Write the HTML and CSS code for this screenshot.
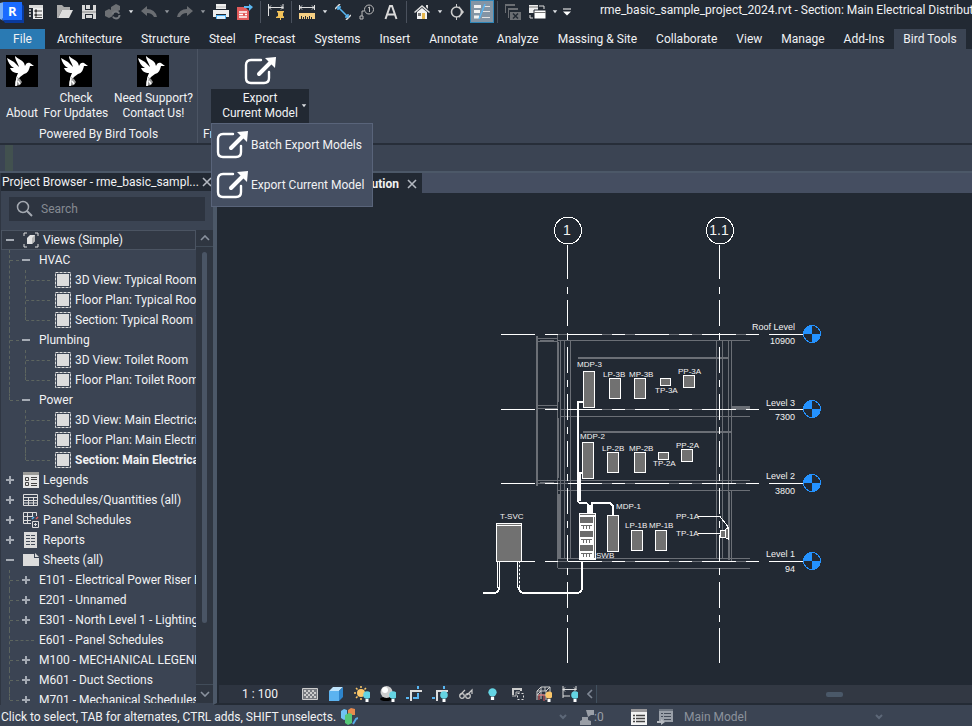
FILE: index.html
```html
<!DOCTYPE html>
<html lang="en">
<head>
<meta charset="utf-8">
<title>rme_basic_sample_project_2024.rvt</title>
<link rel="stylesheet" href="styles.css">
</head>
<body>
<svg class="defs" aria-hidden="true">
  <symbol id="caret" viewBox="0 0 8 5"><path d="M1 0h6L4 4z" fill="#dcdfe3"/></symbol>
  <symbol id="bird" viewBox="0 0 32 32">
    <rect width="32" height="32" fill="#000"/>
    <path d="M1 3l7 4 5 5c-1-4-4-7-4-11 3 3 7 4 9 7l1 3c1-3 3-4 5-3l4 3-4 0c-1 4-2 7-6 8l-4 3-2 3-2-2 2-5c-4 0-7-2-8-5l4 0C4 11 2 7 1 3z" fill="#fff"/>
    <path d="M11 22l3 2 2 3-2 3-5 1 0-4z" fill="#9a9a9a"/><path d="M11 23l-1 8M12 26l2 3" stroke="#fff" stroke-width="1.500"/>
  </symbol>
  <symbol id="export" viewBox="0 0 32 32">
    <path d="M17 5H7Q2 5 2 10v13q0 5 5 5h13q5 0 5-5v-6" fill="none" stroke="#fff" stroke-width="2.4" stroke-linecap="round"/>
    <path d="M15 19L28 6" stroke="#fff" stroke-width="4" stroke-linecap="round"/>
    <path d="M21 3l11-1-1 11z" fill="#fff"/>
  </symbol>
  <symbol id="view" viewBox="0 0 16 16">
    <rect x=".5" y=".5" width="15" height="15" fill="none" stroke="#dcdcdc" stroke-dasharray="3 1"/>
    <rect x="2" y="2" width="12" height="12" fill="#dcdcdc"/>
  </symbol>
  <symbol id="close" viewBox="0 0 10 10"><path d="M1 1l8 8M9 1L1 9" stroke="#b3b8c0" stroke-width="1.6"/></symbol>
  <symbol id="chev" viewBox="0 0 8 6"><path d="M1 1l3 3 3-3" fill="none" stroke="#5d6878" stroke-width="2"/></symbol>
  <symbol id="bulb" viewBox="0 0 8 11"><circle cx="4" cy="4" r="3.8" fill="#64d4e3"/><path d="M2.500 8h3v3h-3z" fill="#fff"/></symbol>
</svg>

<header class="titlebar">
  <div class="quick">
    <button class="tool logo" aria-label="Application menu"><svg width="24" height="24"><path d="M0 3l4-1v19l-4-2z" fill="#78aef5"/><path d="M2 19l3 4h19V6l-3-3z" fill="#0a3a9c"/><path d="M3 2h19v18H3z" fill="#1a6bff"/><text x="8" y="16" class="logo-r">R</text></svg></button>
    <button class="tool props" aria-label="Properties"><svg width="16" height="16"><path d="M1 1h14v3H1z" fill="#d9d9d9"/><path d="M5 4h10v11H5z" fill="#eee"/><path d="M1 5h2v2H1zM1 8h2v2H1zM1 11h2v2H1z" fill="#aaa"/><path d="M7 6h2v2H7zM7 10h2v2H7zM10 7h4M10 11h4M7 13.500h7" fill="#333" stroke="#444"/></svg></button>
    <button class="tool" aria-label="Open"><svg width="16" height="16"><path d="M0 1h5l2 2h6v3H5l-4 8H0z" fill="#aaa"/><path d="M5 6h11l-4 8H1z" fill="#dedede"/></svg></button>
    <button class="tool" aria-label="Save"><svg width="16" height="16"><path d="M1 1h14v14H1z" fill="#d8d8d8"/><path d="M4 1h8v5H4zM4 10h8v5H4z" fill="#222933"/><path d="M5 1h4v4H5zM5 11h6v3H5z" fill="#d8d8d8"/><path d="M1 8h14" stroke="#888"/></svg></button>
    <button class="tool" aria-label="Synchronize"><svg width="18" height="18"><path d="M1 8l4-2 4 2v5l-4 2-4-2zM7 4l5-3 4 2v4l-4 2-5-1z" fill="#6d7074"/><circle cx="12" cy="12" r="3.500" fill="#222933" stroke="#777b80" stroke-width="2" stroke-dasharray="9 2"/></svg></button>
    <button class="arrow" aria-label="Synchronize options"><svg width="6" height="4"><use href="#caret"/></svg></button>
    <button class="tool" aria-label="Undo"><svg width="16" height="16"><path d="M0 7l6-5v3q8 0 10 8h-3q-2-4-7-4v3z" fill="#6a6d72"/></svg></button>
    <button class="arrow" aria-label="Undo list"><svg width="6" height="4"><use href="#caret" opacity=".6"/></svg></button>
    <button class="tool" aria-label="Redo"><svg width="16" height="16"><path d="M16 7l-6-5v3q-8 0-10 8h3q2-4 7-4v3z" fill="#6a6d72"/></svg></button>
    <button class="arrow" aria-label="Redo list"><svg width="6" height="4"><use href="#caret" opacity=".6"/></svg></button>
    <button class="tool" aria-label="Print"><svg width="16" height="16"><path d="M3 0h10v5H3zM0 6h16v7h-3v-3H3v3H0z" fill="#eee"/><path d="M3 3h10" stroke="#bbb"/><path d="M3 11h10v4H3z" fill="#4fb3f6"/><path d="M4 12h8v3H4z" fill="#d9efff"/></svg></button>
    <button class="tool" aria-label="Export PDF"><svg width="16" height="16"><path d="M0 3h8l4 4v9H0z" fill="#e25b5b"/><path d="M2 8h8M2 10.500h4M2 13h8M8 10.500h2" stroke="#fff" stroke-width="1.500"/><path d="M7 2h5V0l4 3-4 4V4H7z" fill="#5cb8f2"/></svg></button>
    <span class="sep"></span>
    <button class="tool" aria-label="Pinned dimension"><svg width="16" height="16"><path d="M.5 0v12M15 0v5M1 3.500h14M3 1.500l-2 2 2 2M13 1.500l2 2-2 2" fill="none" stroke="#e0e0e0"/><path d="M9 7h7v1l-1 1v3l2 1v1H8v-1l2-1V9L9 8zM12 14h1v3h-1z" fill="#f2c25a"/></svg></button>
    <span class="sep"></span>
    <button class="tool" aria-label="Measure"><svg width="16" height="16"><path d="M.5 1v5M15.500 1v5M1 3.500h14M3 1.500l-2 2 2 2M13 1.500l2 2-2 2" fill="none" stroke="#e0e0e0"/><path d="M0 9h16v6H0z" fill="#f5cf83"/><path d="M2.500 12v3M4.500 13v2M6.500 12v3M8.500 13v2M10.500 12v3M12.500 13v2" stroke="#222933"/></svg></button>
    <button class="arrow" aria-label="Measure options"><svg width="6" height="4"><use href="#caret"/></svg></button>
    <button class="tool" aria-label="Aligned dimension"><svg width="16" height="16"><path d="M0 5l5-5M11 16l5-5" stroke="#ddd" stroke-width="1.500"/><path d="M3 3l10 10M3 6V3h3M10 13h3v-3" fill="none" stroke="#58b6f2" stroke-width="1.500"/></svg></button>
    <button class="tool" aria-label="Tag by category"><svg width="16" height="16"><circle cx="10" cy="5.500" r="4.500" fill="none" stroke="#bbb"/><path d="M9 4l1.500-1v5M5 7H3v5M1 12h3v3H1z" fill="none" stroke="#bbb"/></svg></button>
    <button class="tool" aria-label="Text"><svg width="16" height="16"><path d="M2.500 15L7 2h2l4.500 13M4 10.500h8" fill="none" stroke="#dadada" stroke-width="2"/></svg></button>
    <span class="sep"></span>
    <button class="tool" aria-label="3D view"><svg width="16" height="16"><path d="M0 8l8-7 8 7-1 1-7-6-7 6z" fill="#ddd"/><path d="M3 8l5-4 5 4v7H3z" fill="#f3f3f3"/><path d="M12 1h2v4l-2-2z" fill="#ddd"/><path d="M8 9h3v6H8z" fill="#e5b64c"/><path d="M4 9h3v3H4z" fill="#777"/></svg></button>
    <button class="arrow" aria-label="3D view options"><svg width="6" height="4"><use href="#caret"/></svg></button>
    <button class="tool" aria-label="Section"><svg width="16" height="16"><path d="M6.500 0v16" stroke="#ccc"/><path d="M9 2l5 6-5 6z" fill="#ccc"/><circle cx="6.500" cy="8" r="5" fill="#222933" stroke="#ccc" stroke-width="1.600"/></svg></button>
    <button class="tool toggled" aria-label="Thin lines" aria-pressed="true"><svg width="18" height="18"><path d="M1 3.500h7M1 8.500h6M1 14h5" stroke="#f1f1f1" stroke-width="3"/><path d="M11 3.500h6M10 8.500h7M9 14.500h8" stroke="#e2e2e2"/><path d="M12 1L6 16" stroke="#5bb4ee" stroke-width="1.500"/></svg></button>
    <span class="sep"></span>
    <button class="tool" aria-label="Close inactive views"><svg width="16" height="16"><path d="M0 0h10v2H0zM0 2h1v7H0zM3 4h10v2H3zM3 6h1v8H3zM5 8h11v8H5z" fill="#6b6e73"/><path d="M8 9.500l5 5M13 9.500l-5 5" stroke="#222933" stroke-width="1.500"/></svg></button>
    <button class="tool" aria-label="Switch windows"><svg width="18" height="16"><path d="M1 1h9v8H1z" fill="#eee"/><path d="M6 6h12v9H6z" fill="#fff" stroke="#222933"/><path d="M1 3h9M6 8.500h12" stroke="#777"/><path d="M11 2h5v3M2 11v3h3" fill="none" stroke="#ddd"/></svg></button>
    <button class="arrow" aria-label="Switch windows list"><svg width="6" height="4"><use href="#caret"/></svg></button>
    <button class="arrow" aria-label="Customize toolbar"><svg width="10" height="8"><path d="M1 1h8" stroke="#fff"/><path d="M1 3.500h8l-4 4z" fill="#fff"/></svg></button>
  </div>
  <h1>rme_basic_sample_project_2024.rvt - Section: Main Electrical Distribution</h1>
</header>

<nav class="tabs">
  <a href="#" class="file">File</a><a href="#">Architecture</a><a href="#">Structure</a><a href="#">Steel</a><a href="#">Precast</a><a href="#">Systems</a><a href="#">Insert</a><a href="#">Annotate</a><a href="#">Analyze</a><a href="#">Massing &amp; Site</a><a href="#">Collaborate</a><a href="#">View</a><a href="#">Manage</a><a href="#">Add-Ins</a><a href="#" class="current">Bird Tools</a>
</nav>

<section class="ribbon">
  <div class="panel bird-panel">
    <div class="panel-buttons">
      <button class="big"><svg width="32" height="32"><use href="#bird"/></svg><span>About</span></button>
      <button class="big"><svg width="32" height="32"><use href="#bird"/></svg><span>Check<br>For Updates</span></button>
      <button class="big"><svg width="32" height="32"><use href="#bird"/></svg><span>Need Support?<br>Contact Us!</span></button>
    </div>
    <div class="panel-title">Powered By Bird Tools</div>
  </div>
  <div class="panel export-panel">
    <div class="dropdown">
      <button class="big split"><svg width="32" height="32"><use href="#export"/></svg><span>Export<br>Current Model</span><svg class="split-caret" width="6" height="4"><use href="#caret"/></svg></button>
      <div class="menu">
        <button><svg width="32" height="32"><use href="#export"/></svg>Batch Export Models</button>
        <button><svg width="32" height="32"><use href="#export"/></svg>Export Current Model</button>
      </div>
    </div>
    <div class="panel-title">Free</div>
  </div>
</section>
<div class="options"></div>

<main class="work">
  <aside class="browser">
    <div class="browser-head"><h2>Project Browser - rme_basic_sampl...</h2><button aria-label="Close project browser"><svg width="10" height="10"><use href="#close"/></svg></button></div>
    <label class="search"><svg width="18" height="18"><circle cx="7" cy="7" r="5.500" fill="none" stroke="#a4a9b1" stroke-width="1.500"/><path d="M11 11l5 5" stroke="#a4a9b1" stroke-width="2"/></svg><input type="text" placeholder="Search" aria-label="Search"></label>
    <div class="tree-wrap">
      <ul class="tree">
        <li><div class="row selected"><i class="minus"></i><svg width="16" height="16"><path d="M1 4V1h3M12 1h3v3M15 12v3h-3M4 15H1v-3" fill="none" stroke="#ddd"/><path d="M4 6l3-3h5v6l-3 3H4z" fill="#e4e4e4"/><path d="M9 12V6l3-3v6z" fill="#b5b5b5"/></svg>Views (Simple)</div>
          <ul>
            <li><div class="row"><i class="minus"></i>HVAC</div>
              <ul>
                <li><div class="row"><svg width="16" height="16"><use href="#view"/></svg>3D View: Typical Room</div></li>
                <li><div class="row"><svg width="16" height="16"><use href="#view"/></svg>Floor Plan: Typical Room</div></li>
                <li><div class="row"><svg width="16" height="16"><use href="#view"/></svg>Section: Typical Room View</div></li>
              </ul></li>
            <li><div class="row"><i class="minus"></i>Plumbing</div>
              <ul>
                <li><div class="row"><svg width="16" height="16"><use href="#view"/></svg>3D View: Toilet Room</div></li>
                <li><div class="row"><svg width="16" height="16"><use href="#view"/></svg>Floor Plan: Toilet Room</div></li>
              </ul></li>
            <li><div class="row"><i class="minus"></i>Power</div>
              <ul>
                <li><div class="row"><svg width="16" height="16"><use href="#view"/></svg>3D View: Main Electrical</div></li>
                <li><div class="row"><svg width="16" height="16"><use href="#view"/></svg>Floor Plan: Main Electrical</div></li>
                <li><div class="row active"><svg width="16" height="16"><use href="#view"/></svg>Section: Main Electrical</div></li>
              </ul></li>
          </ul></li>
        <li><div class="row"><i class="plus"></i><svg width="16" height="16"><path d="M0 0h16v16H0z" fill="#e6e6e6"/><path d="M0 0h16v3H0z" fill="#9b9b98"/><path d="M2.500 5.500h3v3h-3zM2.500 10.500h3v3h-3zM8 5.500h6M8 7.500h6M8 11.500h6M8 13.500h6" fill="none" stroke="#444"/></svg>Legends</div></li>
        <li><div class="row"><i class="plus"></i><svg width="16" height="16"><path d="M.5 2.500h14v11H.5zM.5 5.500h14M.5 8.500h14M.5 11h14M5.500 5v8M10.500 5v8" fill="none" stroke="#ddd"/></svg>Schedules/Quantities (all)</div></li>
        <li><div class="row"><i class="plus"></i><svg width="16" height="16"><path d="M8 11.500H.5V.5h13V4M.5 4.500H9M.5 8.500H8M4.500 .5v11M9.500 .5V5" fill="none" stroke="#ddd"/><path d="M9.500 9.500h6v6h-6zM12.500 11v3M11 12.500h3" fill="none" stroke="#ddd"/><path d="M9 7l2-2" stroke="#58b6f2" stroke-width="1.500"/><path d="M13 7l2-2" stroke="#e25b5b" stroke-width="1.500"/></svg>Panel Schedules</div></li>
        <li><div class="row"><i class="plus"></i><svg width="16" height="16"><path d="M1 0h13v16H1z" fill="#dcdcdc"/><path d="M3 3.500h4M3 6.500h4M3 9.500h4M3 12.500h4M8 3.500h4M8 6.500h4M8 9.500h4M8 12.500h4" stroke="#444c59"/></svg>Reports</div></li>
        <li><div class="row"><i class="minus"></i><svg width="16" height="16"><path d="M0 2h11v4h5v8H0zM12 1l4 4h-4z" fill="#dcdcdc"/></svg>Sheets (all)</div>
          <ul>
            <li><div class="row"><i class="plus"></i>E101 - Electrical Power Riser Diagram</div></li>
            <li><div class="row"><i class="plus"></i>E201 - Unnamed</div></li>
            <li><div class="row"><i class="plus"></i>E301 - North Level 1 - Lighting</div></li>
            <li class="leaf"><div class="row"><i></i>E601 - Panel Schedules</div></li>
            <li><div class="row"><i class="plus"></i>M100 - MECHANICAL LEGEND</div></li>
            <li><div class="row"><i class="plus"></i>M601 - Duct Sections</div></li>
            <li><div class="row"><i class="plus"></i>M701 - Mechanical Schedules</div></li>
          </ul></li>
      </ul>
      <div class="scroll">
        <button aria-label="Scroll up"><svg width="10" height="6"><path d="M1 5l4-4 4 4" fill="none" stroke="#8a929e" stroke-width="1.600"/></svg></button>
        <div class="track"><span></span></div>
        <button class="down" aria-label="Scroll down"><svg width="10" height="6"><path d="M1 1l4 4 4-4" fill="none" stroke="#8a929e" stroke-width="1.600"/></svg></button>
      </div>
    </div>
  </aside>

  <section class="document">
    <div class="doc-tabs"><div class="doc-tab"><span>Electrical Distribution</span><button aria-label="Close view"><svg width="10" height="10"><use href="#close"/></svg></button></div></div>
    <div class="canvas">
      <svg class="drawing" viewBox="217 193 755 492" preserveAspectRatio="xMinYMin meet" role="img" aria-label="Section: Main Electrical Distribution">
        <g class="grey">
          <path d="M558 334.500h192M558 340.500h192M560 409.500h190M560 416.500h190M558 480.500h192M558 483.500h192M558 490.500h192M560 558.500h190M558 561.500h192M558 568.500h192"/>
          <path d="M557.500 335v233M560.500 341v218M564.500 341v218M570.500 341v218M716.500 341v218M722.500 341v218M728.500 341v218M731.500 341v142M731.500 490v71"/>
          <path d="M537.500 338.500h20v3h-20zM540 340h14M537.500 405.500h20v3h-20zM537.500 480.500h20v3h-20zM540 482h14"/>
          <path class="thick" d="M537 336v150M558 342v60M558 418v60M559 494v65M578 358h150M583 432h148M729 492v68M732 407h18M732 409h18"/>
        </g>
        <g class="white">
          <path class="leveldash" d="M501 334.500h258M501 409.500h258M501 483.500h258M501 561.500h258"/>
          <path d="M769 334.500h34M769 409.500h34M769 483.500h34M769 561.500h34"/>
          <path d="M567.500 245v34M567.500 287v7M567.500 628v35M719.500 245v34M719.500 287v7M719.500 628v35"/>
          <path class="griddash" d="M567.500 300v328M719.500 300v328"/>
          <circle cx="568" cy="230.500" r="13.500"/><circle cx="720" cy="230.500" r="13.500"/>
        </g>
        <g class="heads">
          <g id="head"><circle cx="812" cy="334" r="8.500"/><path d="M812 334v-9a9 9 0 0 0-9 9zM812 334v9a9 9 0 0 0 9-9z"/></g>
          <use href="#head" y="75"/><use href="#head" y="149"/><use href="#head" y="227"/>
        </g>
        <g class="pipe">
          <path d="M583 402h-5v98q0 3 3 3h4q3 0 3 3v8M582 473h-2v28M592 513v-10h16q5 0 5 5v8M590 513v-8"/>
          <path d="M499 587q0 6-6 6h-10M519 587q0 6 6 6h51q6 0 6-6v-26"/>
        </g>
        <path d="M497.500 561v27M499.500 561v27M517.500 561v27M519.500 561v27" class="white"/>
        <path d="M519.500 563v22" class="core"/>
        <g class="box">
          <rect x="583.500" y="371.500" width="11" height="36"/><rect x="609.500" y="378.500" width="11" height="20"/><rect x="634.500" y="378.500" width="11" height="20"/><rect x="660.500" y="378.500" width="10" height="7"/><rect x="683.500" y="375.500" width="11" height="12"/>
          <rect x="582.500" y="442.500" width="11" height="36"/><rect x="607.500" y="452.500" width="11" height="20"/><rect x="634.500" y="452.500" width="11" height="20"/><rect x="658.500" y="452.500" width="10" height="7"/><rect x="681.500" y="449.500" width="11" height="12"/>
          <rect x="607.500" y="515.500" width="11" height="36"/><rect x="631.500" y="530.500" width="11" height="20"/><rect x="655.500" y="530.500" width="11" height="20"/>
          <rect x="496.500" y="523.500" width="25" height="38"/><path d="M496 525.500h26"/>
          <path d="M720.500 530.500h5v7h-5zM725.500 529.500l3-2v12l-3-2z"/>
        </g>
        <path class="white" d="M698 516.500h22l7 9v3M698 533.500h22"/>
        <g class="switchboard">
          <rect x="579" y="513" width="17" height="47" class="fillw"/>
          <path d="M580 514h15v1h-15zM580 517h13v6h-13zM580 531h13v6h-13zM580 545h13v6h-13zM594 517h1v41h-1zM581 525h11v1h-11zM581 539h11v1h-11zM581 553h11v1h-11zM583 526h1v3h-1zM586 526h1v3h-1zM589 526h1v3h-1zM583 540h1v3h-1zM586 540h1v3h-1zM589 540h1v3h-1zM583 554h1v3h-1zM586 554h1v3h-1zM589 554h1v3h-1z"/>
        </g>
        <g class="labels">
          <text x="577" y="367">MDP-3</text><text x="603" y="377">LP-3B</text><text x="629" y="377">MP-3B</text><text x="655" y="393">TP-3A</text><text x="678" y="374">PP-3A</text>
          <text x="580" y="439">MDP-2</text><text x="602" y="451">LP-2B</text><text x="629" y="451">MP-2B</text><text x="653" y="466">TP-2A</text><text x="676" y="448">PP-2A</text>
          <text x="616" y="509">MDP-1</text><text x="625" y="528">LP-1B</text><text x="649" y="528">MP-1B</text><text x="676" y="519">PP-1A</text><text x="676" y="536">TP-1A</text>
          <text x="500" y="519">T-SVC</text><text x="596" y="558">SWB</text>
        </g>
        <g class="levels">
          <text x="795" y="330">Roof Level</text><text x="795" y="344">10900</text><text x="795" y="406">Level 3</text><text x="795" y="420">7300</text><text x="795" y="479">Level 2</text><text x="795" y="494">3800</text><text x="795" y="557">Level 1</text><text x="795" y="572">94</text>
        </g>
        <g class="bubbles"><text x="567" y="235">1</text><text x="719" y="235">1.1</text></g>
      </svg>
    </div>
    <div class="viewbar">
      <button class="scale">1 : 100</button>
      <button aria-label="Detail level"><svg width="16" height="12"><path d="M.5 .5h15v11H.5z" fill="#777a80" stroke="#ccc"/><path d="M2 2h2v2H2zM6 2h2v2H6zM10 2h2v2h-2zM4 4h2v2H4zM8 4h2v2H8zM12 4h2v2h-2zM2 6h2v2H2zM6 6h2v2H6zM10 6h2v2h-2zM4 8h2v2H4zM8 8h2v2H8zM12 8h2v2h-2z" fill="#ccc"/></svg></button>
      <button aria-label="Visual style"><svg width="16" height="16"><path d="M1 5l4-4h10l-4 4z" fill="#bfe3fb"/><path d="M1 5h10v10H1z" fill="#5cb3f0"/><path d="M11 5l4-4v10l-4 4z" fill="#2d84cc"/></svg></button>
      <button aria-label="Sun path"><svg width="16" height="16"><circle cx="7" cy="7" r="4" fill="#fbc76a"/><path d="M7 0v2M7 12v2M0 7h2M12 7h2M2 2l1.500 1.500M12 2l-1.500 1.500M2 12l1.500-1.500" stroke="#fbc76a" stroke-width="1.500"/><use href="#bulb" x="9" y="5" width="8" height="11"/></svg></button>
      <button aria-label="Shadows"><svg width="16" height="16"><ellipse cx="6" cy="13" rx="6" ry="2" fill="#000"/><circle cx="6.500" cy="6" r="6" fill="#ccc"/><circle cx="5" cy="4" r="3" fill="#fff"/><use href="#bulb" x="9" y="5" width="8" height="11"/></svg></button>
      <button aria-label="Crop view"><svg width="16" height="16"><path d="M5 15V5H16" fill="none" stroke="#ddd" stroke-width="2"/><path d="M0 12h3M7 12h5V7M12 0v3" fill="none" stroke="#58b6f2" stroke-width="2"/></svg></button>
      <button aria-label="Show crop region"><svg width="16" height="16"><path d="M5 15V5H16" fill="none" stroke="#ddd" stroke-width="2"/><path d="M0 12h3M12 0v3" fill="none" stroke="#58b6f2" stroke-width="2"/><use href="#bulb" x="8" y="5" width="8" height="11"/></svg></button>
      <button aria-label="Temporary hide"><svg width="14" height="14"><g fill="none" stroke="#c9c9c9" stroke-width="1.200"><circle cx="3" cy="9" r="2.300"/><circle cx="9" cy="9" r="2.300"/><path d="M1 8l5-5M8 8l5-5v4"/></g></svg></button>
      <button aria-label="Reveal hidden"><svg width="9" height="12"><use href="#bulb"/></svg></button>
      <button aria-label="View properties"><svg width="14" height="14"><path d="M2 8V2h8v2" fill="none" stroke="#ccc" stroke-width="2"/><path d="M1 9h4M5 9V5h4" fill="none" stroke="#bbb"/><path d="M6.500 6.500h6v6h-6z" fill="none" stroke="#ddd" stroke-dasharray="2 2"/></svg></button>
      <button aria-label="Analytical model"><svg width="16" height="16"><path d="M1 5l4-4h9v9M1 5h9v9M1 5v9M5 1v12M9 1v4M1 9h12M14 1l-4 4M1 9l4-4" fill="none" stroke="#ccc"/><path d="M3 14V9h5v6" fill="none" stroke="#e25b5b"/><circle cx="13" cy="9" r="3.500" fill="#fbc76a"/><path d="M11.500 13h3v3h-3z" fill="#fff"/></svg></button>
      <button aria-label="Reveal constraints"><svg width="16" height="16"><path d="M1 0v12M14 0v4M1 3.500h13M3 1.500l-2 2 2 2M12 1.500l2 2-2 2M1 10h7" fill="none" stroke="#ddd"/><use href="#bulb" x="9" y="5" width="8" height="11"/></svg></button>
      <button class="collapse" aria-label="Collapse"><svg width="6" height="10"><path d="M5 1L1 5l4 4" fill="none" stroke="#7f8794" stroke-width="1.600"/></svg></button>
      <div class="hscroll"><span></span></div>
    </div>
  </section>
</main>

<footer class="status">
  <p>Click to select, TAB for alternates, CTRL adds, SHIFT unselects.</p>
  <svg class="worksets" width="17" height="17"><path d="M0 3l3-2 3 1v9l-3 1-3-2z" fill="#6fc3f2"/><path d="M7 2l3-2 4 1v6H7z" fill="#e88b4c"/><path d="M4 7l4-2 3 1v9l-4 2-3-2z" fill="#55c878"/><path d="M12 16l3-5 2-1" stroke="#58a9e8" stroke-width="2"/></svg>
  <svg class="chev-left" width="8" height="6"><use href="#chev"/></svg>
  <svg width="14" height="16"><path d="M6 1h8v5h-3l-3 2zM2 8h6v3l3 1v4H0v-4l2-1z" fill="#9a9fa7"/></svg>
  <span class="count">:0</span>
  <svg class="list" width="16" height="16"><path d="M0 0h16v16H0z" fill="#f2f2f2"/><path d="M0 0h16v3H0z" fill="#99989a"/><path d="M2 6.500h2M2 9.500h2M2 12.500h2M5 6.500h9M5 9.500h9M5 12.500h9" stroke="#444" stroke-width="1.300"/></svg>
  <svg class="link" width="16" height="16"><path d="M2 0h14v13H2z" fill="#9aa0a9"/><path d="M2 0h14v2H2z" fill="#6d7580"/><path d="M4 4.500h2M4 7.500h2M7 4.500h7M7 7.500h7M7 10.500h7" stroke="#444c59"/><path d="M0 12h4v-2l4 3-4 3v-2H0z" fill="#b7bbc1"/></svg>
  <button class="model"><span>Main Model</span><svg width="8" height="6"><use href="#chev"/></svg></button>
</footer>
</body>
</html>
```
FILE: styles.css
```css
* { box-sizing: border-box; }
body {
  margin: 0;
  height: 100vh;
  display: flex;
  flex-direction: column;
  overflow: hidden;
  background: #3b4453;
  color: #f1f2f4;
  font: 12px/16px Roboto, "Open Sans", sans-serif;
}
button {
  border: 0;
  padding: 0;
  background: none;
  color: inherit;
  font: inherit;
}
h1, h2, p { margin: 0; font-size: 12px; font-weight: 400; white-space: nowrap; }
ul { list-style: none; margin: 0; padding: 0; }
svg { flex: none; display: block; }
.defs { position: absolute; width: 0; height: 0; }

/* Title bar */
.titlebar { display: flex; height: 29px; background: #222933; overflow: hidden; flex: none; }
.titlebar h1 { margin: 2px 0 0 27px; }
.quick { display: flex; height: 24px; flex: none; }
.tool, .arrow { display: flex; align-items: center; justify-content: center; width: 24px; }
.arrow { width: 12px; }
.logo { align-items: start; }
.logo-r { fill: #fff; font: bold 13px "Open Sans", sans-serif; }
.props { margin-right: 5px; }
.toggled { background: #8495a5; border: 1px solid #2e86b9; height: 23px; }
.sep { width: 1px; margin: 1px 3px; background: #4a515d; }

/* Ribbon tabs */
.tabs { display: flex; gap: 1px; height: 20px; background: #222933; flex: none; }
.tabs a { flex: none; color: inherit; text-decoration: none; padding: 2px 9px 0; white-space: nowrap; }
.tabs .file { width: 45px; text-align: center; background: #2a7ab3; margin-right: 2px; }
.tabs .current { background: #3b4453; }

/* Ribbon */
.ribbon { display: flex; height: 96px; flex: none; border-bottom: 2px solid #272e39; }
.panel { display: flex; flex-direction: column; border-right: 1px solid #4b5463; }
.bird-panel { width: 198px; }
.panel-buttons { display: flex; justify-content: space-between; padding: 0 2px 0 4px; }
.big { display: flex; flex-direction: column; align-items: center; justify-content: space-between; height: 74px; padding: 6px 2px 2px; line-height: 15px; white-space: nowrap; }
.panel-title { text-align: center; padding-top: 3px; }
.export-panel { border: 0; padding-left: 13px; }
.export-panel .panel-title { text-align: left; margin-left: -8px; }
.dropdown { position: relative; }
.split { position: relative; width: 98px; background: linear-gradient(transparent 40px, #222933 40px); }
.split-caret { position: absolute; right: 2px; bottom: 15px; }
.menu { position: absolute; left: 0; top: 74px; z-index: 2; width: 162px; background: #454f62; border: 1px solid #59647a; padding: 1px 0; }
.menu button { display: flex; align-items: center; gap: 3px; width: 100%; height: 40px; padding-left: 4px; white-space: nowrap; }
.options { height: 28px; flex: none; border-bottom: 2px solid #4c5868; background: linear-gradient(90deg, transparent 5px, #42514f 5px, #42514f 13px, transparent 13px); }

/* Work area */
.work { flex: 1; min-height: 0; display: grid; grid-template-columns: 213px 1fr; }
.browser { display: flex; flex-direction: column; min-width: 0; min-height: 0; border-left: 1px solid #2f3642; padding-bottom: 2px; }
.browser-head { display: flex; justify-content: space-between; align-items: center; height: 18px; padding: 0 1px; background: #222933; flex: none; }
.search { display: flex; align-items: center; gap: 7px; height: 24px; margin: 6px 8px 9px; padding-left: 7px; background: #2d3440; flex: none; }
.search input { flex: 1; min-width: 0; border: 0; padding: 0; background: none; font: inherit; color: inherit; }
.search input::placeholder { color: #858a92; opacity: 1; }
.tree-wrap { display: flex; flex: 1; min-height: 0; }
.tree { flex: 1; min-width: 0; overflow: hidden; }
.row { display: flex; align-items: center; gap: 4px; height: 20px; padding-left: 5px; white-space: nowrap; }
.row i { width: 8px; height: 8px; margin-right: 5px; flex: none; }
.minus { background: linear-gradient(#a5abb4, #a5abb4) 0 3px / 8px 2px no-repeat; }
.plus { background: linear-gradient(#a5abb4, #a5abb4) 0 3px / 8px 2px no-repeat, linear-gradient(#a5abb4, #a5abb4) 3px 0 / 2px 8px no-repeat; }
.selected { background: #323945; border: 1px solid #4b5462; padding-left: 4px; }
.active { font-weight: 700; }
.tree ul li { position: relative; }
.tree ul li::before { content: ""; position: absolute; left: 8px; top: 0; bottom: 0; border-left: 1px dashed #5d655f; }
.tree ul li::after { content: ""; position: absolute; left: 9px; top: 10px; width: 9px; border-top: 1px dashed #5d655f; }
.tree ul li:last-child::before { bottom: auto; height: 10px; }
.tree ul .row { padding-left: 21px; }
.tree .leaf::after { width: 24px; }
.tree ul ul li::before { left: 24px; }
.tree ul ul li::after { left: 25px; width: 24px; }
.tree ul ul .row { padding-left: 54px; }
.scroll { display: flex; flex-direction: column; width: 17px; background: #2f3641; flex: none; }
.scroll button { display: flex; align-items: center; justify-content: center; height: 17px; border-bottom: 1px solid #414c59; }
.scroll .down { border-top: 1px solid #414c59; border-bottom: 0; height: 19px; }
.track { flex: 1; padding: 5px 6px; }
.track span { display: block; width: 5px; height: 87%; border-radius: 3px; background: #4a5565; }

.document { display: flex; flex-direction: column; min-width: 0; min-height: 0; background: #222933; border-bottom: 2px solid #242b35; border-left: 4px solid #4c5868; }
.doc-tabs { height: 20px; background: #454e61; flex: none; }
.doc-tab { display: flex; align-items: center; justify-content: flex-end; gap: 8px; width: 205px; height: 20px; padding: 2px 5px 0 0; background: #222933; font-weight: 700; }
.canvas { flex: 1; min-height: 0; }
.drawing { width: 100%; height: 100%; shape-rendering: crispEdges; }
.grey { fill: none; stroke: #6b6f76; }
.thick { stroke-width: 2; }
.white { fill: none; stroke: #fff; }
.leveldash { stroke-dasharray: 34 10 13 10; }
.griddash { stroke-dasharray: 26 7 7 7; }
.heads circle { fill: none; stroke: #2492ff; }
.heads path { fill: #2492ff; }
.pipe { fill: none; stroke: #fff; stroke-width: 2; }
.core { stroke: #4a5059; stroke-dasharray: 2 2; }
.box { fill: #717171; stroke: #fff; }
.switchboard { fill: #6b6b6b; }
.fillw { fill: #fff; }
.labels, .levels, .bubbles { fill: #f2f2f2; font: 8px "Liberation Sans", Arial, sans-serif; }
.levels { font-size: 9px; text-anchor: end; }
.bubbles { font-size: 14px; text-anchor: middle; }

.viewbar { display: flex; height: 18px; margin-left: 2px; background: #2d3440; flex: none; }
.viewbar button { display: flex; align-items: center; justify-content: center; width: 26px; }
.viewbar .scale { width: 78px; padding-left: 4px; }
.viewbar .collapse { width: 14px; border-right: 1px solid #41505e; }
.hscroll { flex: 1; display: flex; align-items: center; justify-content: center; padding-left: 100px; background: #323843; }
.hscroll span { width: 17px; height: 5px; border-radius: 2px; background: #4a5868; }

.status { display: flex; align-items: center; height: 21px; padding: 2px 0 0 1px; flex: none; }
.status p { width: 340px; }
.chev-left { margin: 0 13px 0 201px; }
.count { width: 37px; color: #9a9fa7; }
.link { margin: 0 11px 0 10px; }
.model { display: flex; align-items: center; justify-content: space-between; width: 199px; color: #8c929c; }
```
